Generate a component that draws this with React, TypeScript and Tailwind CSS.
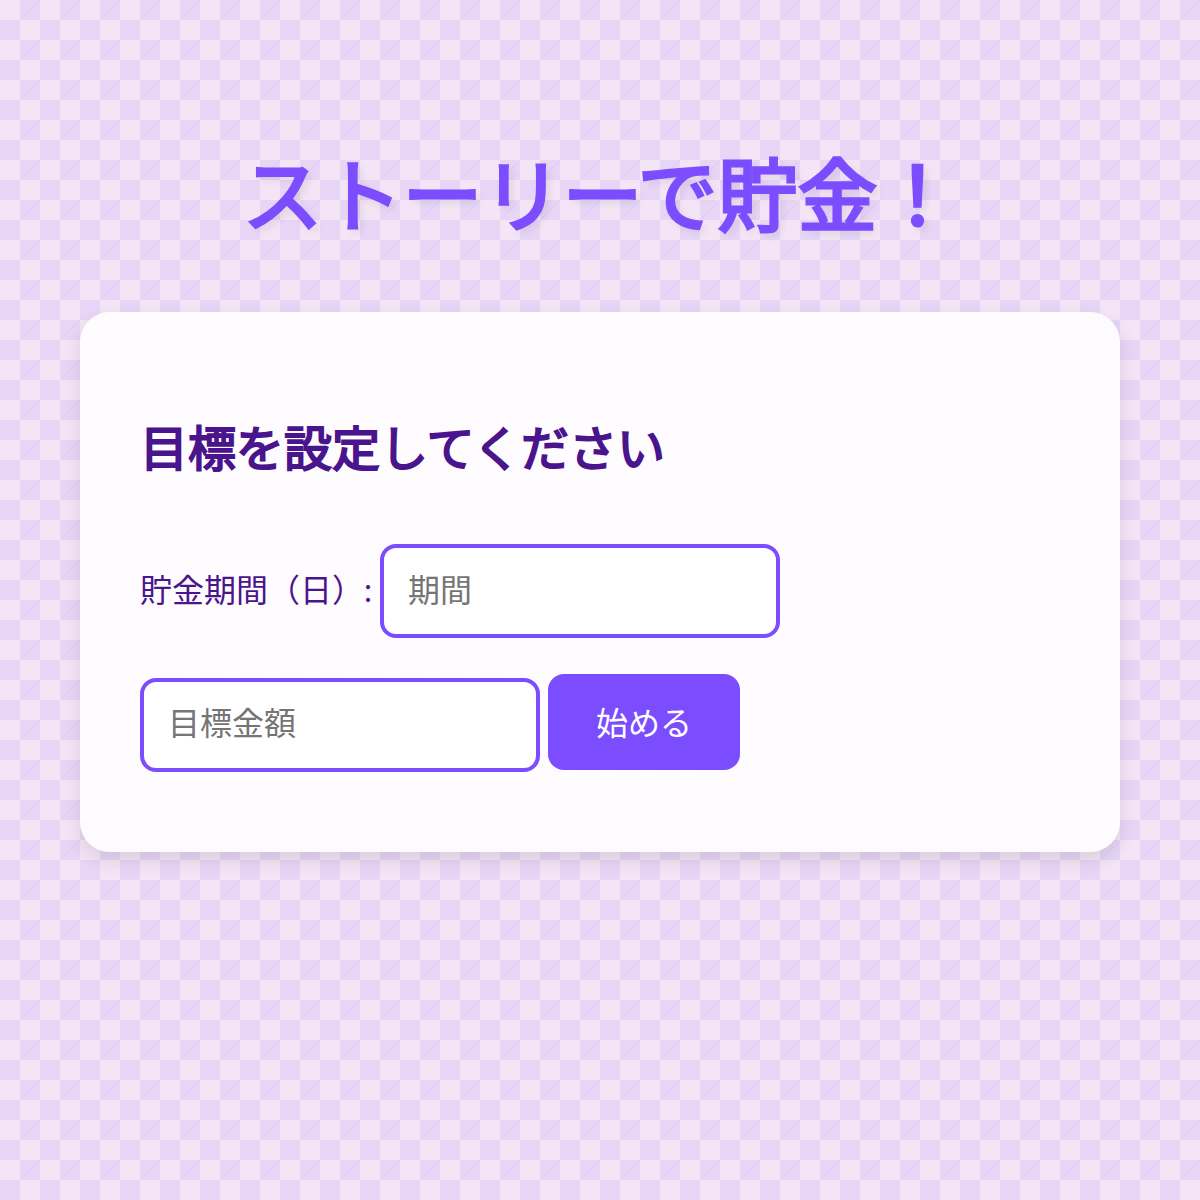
import React, { useState } from 'react';

const App = () => {
  const [days, setDays] = useState('');
  const [amount, setAmount] = useState('');

  return (
    <div
      lang="ja"
      className="min-h-screen bg-[#f3e5f5] bg-[linear-gradient(45deg,#7c4dff1a_25%,transparent_25%),linear-gradient(-45deg,#7c4dff1a_25%,transparent_25%),linear-gradient(45deg,transparent_75%,#7c4dff1a_75%),linear-gradient(-45deg,transparent_75%,#7c4dff1a_75%)] bg-[length:40px_40px] bg-[position:0_0,0_20px,20px_-20px,-20px_0] px-20 pt-[134px] pb-20 font-['Lato','Noto_Sans_CJK_JP',sans-serif] text-[32px] text-[#4a148c]"
    >
      <h1 className="text-center text-[80px] leading-[120px] font-normal text-[#7c4dff] [-webkit-text-stroke:3px_#7c4dff] [text-shadow:4px_4px_8px_#0000001a]">
        ストーリーで貯金！
      </h1>
      <main className="mt-[58px] rounded-[30px] bg-white/90 p-[60px] shadow-[0_8px_20px_#0000001a]">
        <h2 className="my-10 text-[48px] leading-[72px] font-normal [-webkit-text-stroke:2px_#4a148c]">
          目標を設定してください
        </h2>
        <form onSubmit={e => e.preventDefault()}>
          <div className="flex flex-wrap items-baseline gap-x-2 pt-5">
            <label htmlFor="days">貯金期間（日）:</label>
            <input
              className="h-[94px] w-[400px] rounded-2xl border-4 border-[#7c4dff] bg-white px-6 pb-1 outline-none placeholder:text-[#757575]"
              id="days"
              type="text"
              inputMode="numeric"
              placeholder="期間"
              value={days}
              onChange={e => setDays(e.target.value)}
            />
          </div>
          <div className="flex flex-wrap items-baseline gap-x-2 pt-9 pb-5">
            <input
              className="h-[94px] w-[400px] rounded-2xl border-4 border-[#7c4dff] bg-white px-6 pb-1 outline-none placeholder:text-[#757575]"
              type="text"
              inputMode="numeric"
              aria-label="目標金額"
              placeholder="目標金額"
              value={amount}
              onChange={e => setAmount(e.target.value)}
            />
            <button
              className="h-24 rounded-2xl bg-[#7c4dff] px-12 pt-0.5 text-white"
              type="submit"
            >
              始める
            </button>
          </div>
        </form>
      </main>
    </div>
  );
};

export default App;
